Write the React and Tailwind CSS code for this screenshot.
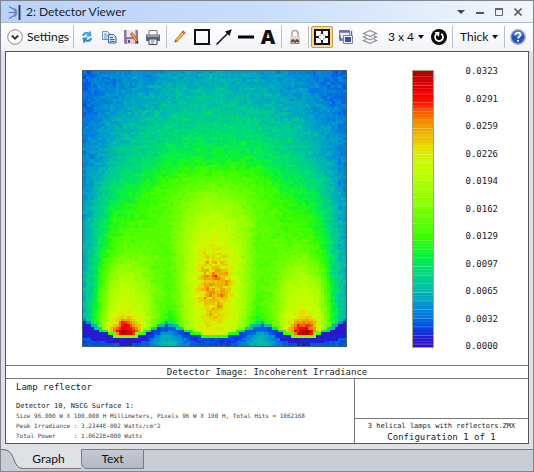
import { useState } from 'react';

const COLS = 96;
const ROWS = 100;
const LEVELS = 72;

const colorStops = [
    [0, 48, 16, 192],
    [0.035, 32, 32, 216],
    [0.065, 0, 72, 226],
    [0.11, 0, 120, 222],
    [0.17, 0, 164, 196],
    [0.22, 0, 196, 160],
    [0.29, 0, 226, 104],
    [0.34, 12, 244, 50],
    [0.39, 52, 252, 0],
    [0.47, 100, 255, 0],
    [0.53, 140, 255, 0],
    [0.635, 190, 255, 0],
    [0.69, 212, 244, 0],
    [0.725, 228, 222, 0],
    [0.77, 236, 184, 0],
    [0.815, 242, 144, 0],
    [0.86, 252, 84, 0],
    [0.885, 255, 16, 0],
    [0.93, 236, 0, 0],
    [1, 184, 0, 0],
];

// left half of the detector, the right half mirrors it
const gridX = [0, 8, 15, 22, 30, 42, 60, 72, 88, 100, 112, 122, 132];
const gridY = [0, 30, 60, 90, 120, 150, 180, 205, 225, 245, 270];
const grid = [
    [0.09, 0.1, 0.11, 0.11, 0.12, 0.13, 0.14, 0.15, 0.16, 0.17, 0.17, 0.18, 0.18],
    [0.1, 0.11, 0.12, 0.13, 0.14, 0.16, 0.18, 0.19, 0.2, 0.21, 0.21, 0.22, 0.22],
    [0.11, 0.13, 0.15, 0.16, 0.18, 0.2, 0.23, 0.24, 0.26, 0.27, 0.27, 0.27, 0.27],
    [0.12, 0.15, 0.17, 0.19, 0.21, 0.24, 0.27, 0.3, 0.33, 0.34, 0.35, 0.35, 0.35],
    [0.14, 0.17, 0.21, 0.24, 0.28, 0.32, 0.36, 0.39, 0.43, 0.46, 0.48, 0.5, 0.5],
    [0.16, 0.2, 0.25, 0.3, 0.35, 0.39, 0.41, 0.43, 0.46, 0.53, 0.58, 0.62, 0.63],
    [0.18, 0.22, 0.29, 0.36, 0.42, 0.47, 0.46, 0.45, 0.45, 0.55, 0.64, 0.69, 0.71],
    [0.19, 0.24, 0.33, 0.44, 0.53, 0.59, 0.54, 0.47, 0.44, 0.55, 0.67, 0.76, 0.79],
    [0.2, 0.25, 0.36, 0.5, 0.61, 0.65, 0.6, 0.49, 0.43, 0.55, 0.67, 0.77, 0.8],
    [0.2, 0.27, 0.39, 0.54, 0.65, 0.69, 0.63, 0.5, 0.38, 0.52, 0.65, 0.72, 0.74],
    [0.2, 0.27, 0.39, 0.54, 0.65, 0.72, 0.61, 0.42, 0.14, 0.46, 0.62, 0.66, 0.67],
];

// upper edge of the shadow cast by the reflectors
const edgeX = [0, 10, 20, 30, 43, 56, 66, 76, 84, 92, 102, 114, 132];
const edgeY = [251, 257, 262, 266, 269, 266, 262, 257, 255, 257, 261, 266, 268];

const lerp = (a, b, t) => a + (b - a) * t;

const locate = (list, v) => {
    let i = 0;
    while (i < list.length - 2 && v > list[i + 1]) i++;
    return [i, Math.min(1, Math.max(0, (v - list[i]) / (list[i + 1] - list[i])))];
};

const toColor = (v) => {
    const [i, t] = locate(colorStops.map((s) => s[0]), v);
    const c = [1, 2, 3].map((k) => Math.round(lerp(colorStops[i][k], colorStops[i + 1][k], t)));
    return `rgb(${c.join(',')})`;
};

const random = (seed) => () => {
    seed = (seed * 1664525 + 1013904223) >>> 0;
    return seed / 4294967296;
};

const irradiance = (x, y, noise) => {
    const mx = x > 132 ? 264 - x : x;
    const [e, et] = locate(edgeX, mx);
    const edge = lerp(edgeY[e], edgeY[e + 1], et);

    if (y > edge) {
        const depth = y - edge;
        const mid = Math.exp(-(((mx - 86) / 17) ** 2));
        const middle = Math.max(0, (mx - 70) / 62);
        const side = Math.max(0, 1 - mx / 30);
        const base = depth < 7 + side * 8 ? 0.02 + 0.05 * middle : 0.075;
        return base + mid * (0.03 + Math.min(0.1, depth * 0.007)) + noise * 0.012;
    }

    const [i, tx] = locate(gridX, mx);
    const [j, ty] = locate(gridY, y);
    let v = lerp(lerp(grid[j][i], grid[j][i + 1], tx), lerp(grid[j + 1][i], grid[j + 1][i + 1], tx), ty);

    const lamp = Math.exp(-(((mx - 43) / 15) ** 2) - ((y - 264) / 14) ** 2);
    v += lamp * 0.29;
    const hot = Math.exp(-(((mx - 132) / 17) ** 2) - ((y - 212) / 36) ** 2);
    v += noise * (0.019 + hot * 0.035 + lamp * 0.03);
    if (edge - y < 3) v = Math.min(v * 0.6, 0.5);
    return v;
};

const buildCells = () => {
    const next = random(41);
    const paths = Array.from({ length: LEVELS }, () => '');
    let last = 0;
    for (let r = 0; r < ROWS; r++) {
        for (let c = 0; c < COLS; c++) {
            const n = (next() + next() + next() - 1.5) * 1.5;
            last = last * 0.2 + n;
            const v = irradiance((c + 0.5) * 2.75, (r + 0.5) * 2.76, last);
            const level = Math.max(0, Math.min(LEVELS - 1, Math.round(v * (LEVELS - 1))));
            paths[level] += `M${c} ${r}h1v1h-1z`;
        }
    }
    return paths;
};

const cells = buildCells();

const scaleLabels = ['0.0323', '0.0291', '0.0259', '0.0226', '0.0194', '0.0162', '0.0129', '0.0097', '0.0065', '0.0032', '0.0000'];

const HeatMap = () => (
    <svg viewBox="0 0 96 100" preserveAspectRatio="none" shapeRendering="crispEdges" role="img" aria-label="Incoherent irradiance" className="h-[277px] w-[265px] border border-[#3d6070]">
        <rect width="96" height="100" fill="#00c8a0" />
        {cells.map((d, i) => d && <path key={i} d={d} fill={toColor(i / (LEVELS - 1))} />)}
    </svg>
);

const ColorScale = () => (
    <svg viewBox="0 0 22 96" preserveAspectRatio="none" aria-hidden="true" className="h-[278px] w-[22px] border border-[#666633]/60">
        {Array.from({ length: 96 }, (_, i) => (
            <rect key={i} y={i} width="22" height="1.1" fill={toColor(1 - i / 95)} />
        ))}
        {Array.from({ length: 32 }, (_, i) => (
            <rect key={i} y={i * 3 + 1.8} width="22" height="0.35" fill="#fff" opacity="0.2" />
        ))}
    </svg>
);

const Icon = ({ children, size = 16 }) => (
    <svg width={size} height={size} viewBox={`0 0 ${size} ${size}`} fill="none" aria-hidden="true" className="shrink-0">
        {children}
    </svg>
);

const ToolButton = ({ label, active, onClick, children }) => (
    <button
        type="button"
        title={label}
        aria-label={label}
        onClick={onClick}
        className={
            active
                ? 'flex size-[22px] shrink-0 items-center justify-center rounded-[2px] border border-[#c49a4c] bg-[#fbd98c]'
                : 'flex size-[22px] shrink-0 items-center justify-center'
        }
    >
        {children}
    </button>
);

const Separator = () => <span className="mx-[2px] h-[22px] w-px shrink-0 bg-[#b9c0cb]" />;

const ToolSelect = ({ label, value }) => (
    <div className="flex shrink-0 items-center gap-[3px]">
        <select aria-label={label} defaultValue={value} className="appearance-none bg-transparent text-[12px] leading-[18px]">
            <option>{value}</option>
        </select>
        <svg width="6" height="4" viewBox="0 0 6 4" aria-hidden="true">
            <path d="M0 0h6L3 4z" fill="#111" />
        </svg>
    </div>
);

const TitleBar = () => (
    <header className="flex h-[22px] items-center border-b border-[#aab9cf] bg-linear-to-r from-[#b9d2fb] via-[#c9defa] to-[#f4f7fc] pr-[7px] pl-[6px]">
        <svg width="15" height="18" viewBox="0 0 15 18" fill="none" aria-hidden="true">
            <path d="M12.500 2v15" stroke="#26344f" strokeWidth="1.800" />
            <path d="M2 3.500l7 4M1.500 9.500H9M2 15.500l7-4" stroke="#5a77ad" strokeWidth="1.100" />
            <path d="M7.500 5l2.500 3-3.500-.2M8 8l2.500 1.500L8 11M7.500 14l2.500-3-3.500.2" stroke="#5a77ad" strokeWidth=".8" />
        </svg>
        <h1 className="ml-[4px] flex-1 text-[12px] leading-[18px] text-[#1b1f27]">2: Detector Viewer</h1>
        <div className="flex gap-[3px]">
            <button type="button" aria-label="Window menu" className="flex size-4 items-center justify-center">
                <Icon size={10}><path d="M1 3h8L5 7z" fill="#444" /></Icon>
            </button>
            <button type="button" aria-label="Minimize" className="flex size-4 items-center justify-center">
                <Icon size={10}><path d="M1 6h8" stroke="#555" strokeWidth="2" /></Icon>
            </button>
            <button type="button" aria-label="Maximize" className="flex size-4 items-center justify-center">
                <Icon size={10}><path d="M1.500 2v6.500h7V2" stroke="#666" /><path d="M1 2h8" stroke="#666" strokeWidth="2" /></Icon>
            </button>
            <button type="button" aria-label="Close" className="flex size-4 items-center justify-center">
                <Icon size={10}><path d="M1.500 1.500l7 7M8.500 1.500l-7 7" stroke="#555" strokeWidth="1.600" /></Icon>
            </button>
        </div>
    </header>
);

const Toolbar = () => {
    const [fit, setFit] = useState(true);

    return (
        <div className="flex h-[28px] items-center bg-linear-to-b from-white to-[#f1f3f7] px-[6px]">
            <button type="button" className="flex w-[64px] shrink-0 items-center gap-[4px] text-[12px] leading-[18px]">
                <Icon>
                    <circle cx="8" cy="8" r="7.300" fill="#fff" stroke="#858585" />
                    <path d="M4.800 6.500L8 9.700l3.200-3.200" stroke="#333" strokeWidth="1.900" />
                </Icon>
                Settings
            </button>
            <Separator />
            <ToolButton label="Refresh">
                <Icon>
                    <path d="M3 7c.3-3.200 3.500-4.800 6.500-3.500L11.500 1.500l1 6H6.800L8.700 5.700C7 5 5.500 5.500 5 7z" fill="#3fa4dc" />
                    <path d="M13 9c-.3 3.200-3.500 4.800-6.500 3.500L4.500 14.500l-1-6h5.700L7.300 10.400c2 .7 3.200.1 3.700-1.400z" fill="#2b8fd0" />
                </Icon>
            </ToolButton>
            <ToolButton label="Copy">
                <Icon>
                    <path d="M1.500 2.500h5l2 2v6h-7z" fill="#e9f1fc" stroke="#6c8fc8" />
                    <path d="M3 5h3M3 7h4M3 9h3" stroke="#6c8fc8" />
                    <path d="M7.500 5.500h5l2.500 2.500v6H7.500z" fill="#cfe0f8" stroke="#3f65aa" />
                    <path d="M9 8.500h3M9 10.500h4.500M9 12.500h4.500" stroke="#3f65aa" />
                </Icon>
            </ToolButton>
            <ToolButton label="Save">
                <Icon>
                    <path d="M1 1h14v14H2l-1-1z" fill="#8f76a8" />
                    <path d="M3.500 1h9v7h-9z" fill="#ece4f3" />
                    <path d="M4 10h8v5H4z" fill="#d8cce2" />
                    <path d="M5 11h2v3H5z" fill="#65507c" />
                    <path d="M8 4l6 8" stroke="#b95b20" strokeWidth="3" />
                    <path d="M8 4l6 8" stroke="#f5a43a" strokeWidth="1.600" />
                    <path d="M13 13l2-1.500.5 3z" fill="#222" />
                </Icon>
            </ToolButton>
            <ToolButton label="Print">
                <Icon>
                    <path d="M4 1.500h8v5H4z" fill="#fff" stroke="#777" />
                    <path d="M1 5.500h14v6.500H1z" fill="#666a70" />
                    <path d="M2 7h12" stroke="#a9adb3" strokeWidth="1.500" />
                    <path d="M4 10h8v5.500H4z" fill="#f5fafe" stroke="#444" />
                    <path d="M6 12h4M6 14h3" stroke="#3e94d0" />
                </Icon>
            </ToolButton>
            <Separator />
            <ToolButton label="Draw">
                <Icon>
                    <path d="M4.500 11.500l7-8" stroke="#b87520" strokeWidth="3.200" />
                    <path d="M4.500 11.500l7-8" stroke="#ffc343" strokeWidth="1.600" />
                    <path d="M11 4l1.300-1.500" stroke="#d6564b" strokeWidth="3.500" />
                    <path d="M2.500 13.800l.7-3.300 2.500 2z" fill="#8a5a32" />
                </Icon>
            </ToolButton>
            <ToolButton label="Rectangle">
                <Icon><path d="M1 1h14v14H1z" stroke="#111" strokeWidth="2" /></Icon>
            </ToolButton>
            <ToolButton label="Arrow">
                <Icon>
                    <path d="M0.500 15.500L12 4" stroke="#111" strokeWidth="1.500" />
                    <path d="M15.800.3L13.500 7 9 2.600z" fill="#111" />
                </Icon>
            </ToolButton>
            <ToolButton label="Line">
                <Icon><path d="M0 8h16" stroke="#050505" strokeWidth="3" /></Icon>
            </ToolButton>
            <ToolButton label="Annotate">
                <span className="font-['Noto_Sans',sans-serif] text-[20px] leading-[20px] font-black">A</span>
            </ToolButton>
            <Separator />
            <ToolButton label="Lock">
                <Icon>
                    <path d="M4.800 9V4.500C4.800.5 11.200.5 11.200 4.500V9" stroke="#aaa" strokeWidth="1.600" />
                    <path d="M3.500 7.500h9V15h-9z" fill="#cdbb8c" />
                    <path d="M3.500 7.500h9v2.500h-9z" fill="#d9dad8" />
                    <path d="M4 13l2-2 2 2 2-2 2 2" stroke="#4b3f24" strokeWidth="1.500" />
                    <path d="M3.500 14.500h9" stroke="#888" />
                </Icon>
            </ToolButton>
            <Separator />
            <ToolButton label="Fit window" active={fit} onClick={() => setFit(!fit)}>
                <Icon size={18}>
                    <path d="M2 2h14v14H2z" fill="#fff" stroke="#111" strokeWidth="2" />
                    <path d="M9 3v3M9 12v3M3 9h3M12 9h3" stroke="#222" strokeWidth="2" />
                    <path d="M5.500 7.500h2v-2M12.500 7.500h-2v-2M5.500 10.500h2v2M12.500 10.500h-2v2" stroke="#999" strokeWidth=".6" />
                </Icon>
            </ToolButton>
            <span className="w-[2px] shrink-0" />
            <ToolButton label="Windows">
                <Icon>
                    <path d="M1.500 1.500h10v8h-10z" fill="#e7ecf8" stroke="#8992aa" />
                    <path d="M1 2.500h11" stroke="#6475b4" strokeWidth="2.500" />
                    <path d="M5.500 6.500h9v8h-9z" fill="#eef1fa" stroke="#7682a4" />
                    <path d="M7 8h6v5H7z" fill="#3d4fae" />
                    <path d="M2 6v5h3M13.500 2v4" stroke="#4c61b0" strokeWidth="1.400" />
                </Icon>
            </ToolButton>
            <span className="w-[2px] shrink-0" />
            <ToolButton label="Layers">
                <Icon>
                    <path d="M8 1.500l6.500 3L8 7.500l-6.500-3zM4 7L1.500 8 8 11l6.500-3L12 7M4 10.500l-2.500 1L8 14.500l6.500-3-2.500-1" stroke="#858585" strokeWidth="1.100" />
                </Icon>
            </ToolButton>
            <span className="w-[7px] shrink-0" />
            <ToolSelect label="Grid size" value="3 x 4" />
            <span className="w-[4px] shrink-0" />
            <ToolButton label="Reset">
                <Icon>
                    <circle cx="8" cy="8" r="8" fill="#050505" />
                    <path d="M10.300 4.800a4 4 0 1 1-4.800.2" stroke="#fff" strokeWidth="1.700" />
                    <path d="M3.500 3.200l5-.5-.5 5.300z" fill="#fff" />
                </Icon>
            </ToolButton>
            <Separator />
            <span className="w-[5px] shrink-0" />
            <ToolSelect label="Line width" value="Thick" />
            <span className="w-[4px] shrink-0" />
            <Separator />
            <ToolButton label="Help">
                <Icon>
                    <circle cx="8" cy="8" r="7.200" fill="#2552b8" stroke="#a4abb8" strokeWidth="1.400" />
                    <path d="M2.500 6.500a5.700 5.700 0 0 1 11 0c-3 1.500-8 1.500-11 0z" fill="#4d78d0" />
                    <path d="M5.500 6c.2-3.300 5.300-3 5 0-.2 1.500-2.300 1.500-2.400 3.500M8 11v1.800" stroke="#fff" strokeWidth="1.800" />
                </Icon>
            </ToolButton>
        </div>
    );
};

const Report = () => (
    <section className="flex flex-1 flex-col border border-[#555] bg-white font-['DejaVu_Sans_Mono',monospace] text-[9px] leading-[12px] text-[#222]">
        <div className="flex flex-1 items-start pt-[18px] pr-[30px] pb-[11px] pl-[76px]">
            <HeatMap />
            <div className="ml-auto flex gap-[31px]">
                <ColorScale />
                <ol className="-mt-[5px] flex h-[287px] flex-col justify-between">
                    {scaleLabels.map((label) => (
                        <li key={label}>{label}</li>
                    ))}
                </ol>
            </div>
        </div>
        <h2 className="border-y border-[#777] text-center leading-[12px]">Detector Image: Incoherent Irradiance</h2>
        <div className="flex h-[64px]">
            <div className="w-2/3 pt-[2px] pl-[10px] text-[6px] leading-[10px] whitespace-pre text-[#444]">
                <p className="mb-[8px] text-[9px] leading-[12px] text-[#222]">Lamp reflector</p>
                <p className="text-[7px] text-[#222]">Detector 10, NSCG Surface 1:</p>
                <p>Size 96.000 W X 100.000 H Millimeters, Pixels 96 W X 100 H, Total Hits = 1062168</p>
                <p>Peak Irradiance : 3.2344E-002 Watts/cm^2</p>
                <p>Total Power     : 1.0622E+000 Watts</p>
            </div>
            <div className="flex w-1/3 flex-col border-l border-[#777] text-center">
                <div className="flex-1" />
                <p className="border-t border-[#777] pt-px text-[7px] leading-[12px]">3 helical lamps with reflectors.ZMX</p>
                <p className="leading-[11px]">Configuration 1 of 1</p>
            </div>
        </div>
    </section>
);

const Tabs = () => (
    <nav role="tablist" className="mt-[5px] flex h-[22px] items-start bg-[#c9ccd3] text-[12px] leading-[19px]">
        <svg width="22" height="20" viewBox="0 0 22 20" aria-hidden="true">
            <path d="M0 0C16-1 11 19 22 19.500V0z" fill="#dfe1e5" />
            <path d="M0 .5C16-.5 10 19 22 19.500" fill="none" stroke="#666b73" />
        </svg>
        <button type="button" role="tab" aria-selected="true" className="h-[20px] w-[58px] border-b border-[#777c84] bg-[#dfe1e5] pr-[7px]">
            Graph
        </button>
        <button type="button" role="tab" aria-selected="false" className="h-[20px] w-[63px] rounded-bl-[6px] border border-[#777c84] bg-linear-to-b from-[#c5c9d3] to-[#b2b8c5] leading-[18px]">
            Text
        </button>
        <span className="flex-1 border-t border-[#777c84]" />
    </nav>
);

const App = () => {
    return (
        <main className="flex min-h-screen flex-col border border-[#7f858e] bg-[#dfe1e5] font-['Lato','Open_Sans',sans-serif] text-[#111]">
            <TitleBar />
            <Toolbar />
            <div className="flex flex-1 flex-col px-[4px]">
                <Report />
            </div>
            <Tabs />
        </main>
    );
};

export default App;
